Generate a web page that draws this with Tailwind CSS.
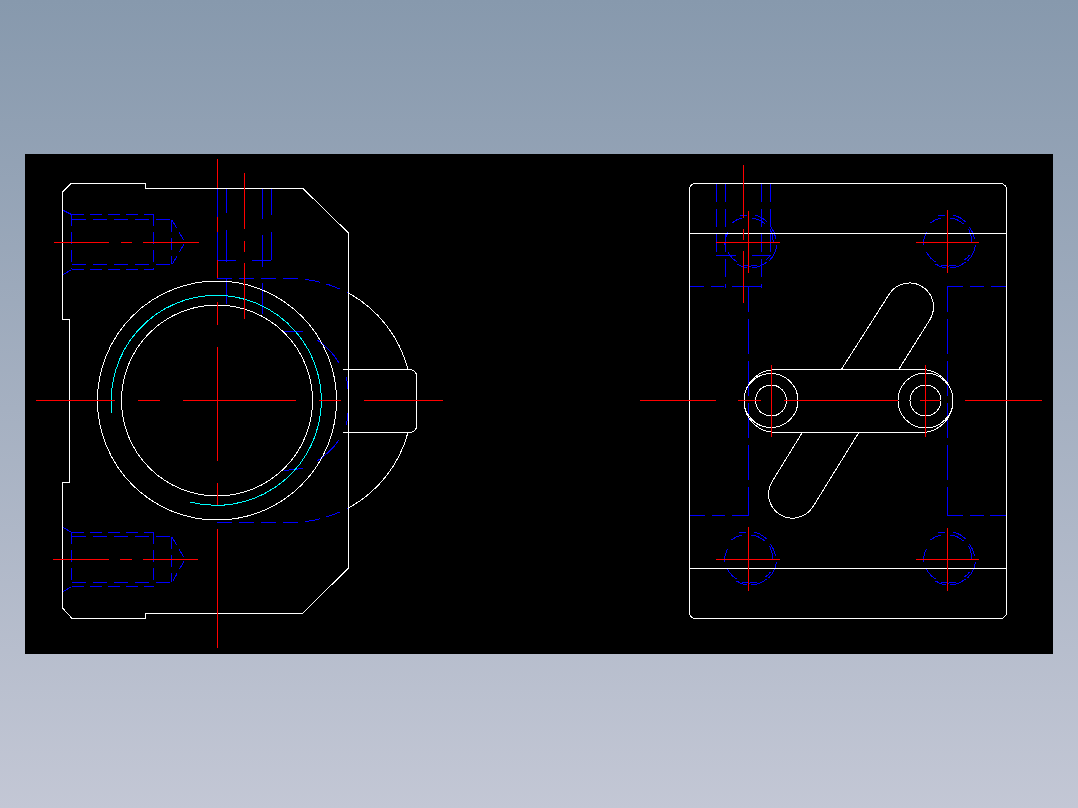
<!DOCTYPE html>
<html lang="en">
<head>
    <meta charset="UTF-8">
    <title>CAD drawing preview</title>
    <script src="https://cdn.jsdelivr.net/npm/@tailwindcss/browser@4"></script>
</head>
<body class="h-[808px] overflow-hidden bg-linear-to-b from-[#8799ad] to-[#c3c7d5]">
    <div class="pt-[154px] pl-[25px]">
        <div class="w-[1028px] h-[500px] bg-black">
            <svg class="block w-full h-full fill-none [shape-rendering:crispEdges]" viewBox="25 154 1028 500" stroke-width="1">
                <defs>
                    <!-- hole seen from above: outer + inner dashed arcs -->
                    <g id="hole">
                        <path d="M-17 -19A26 26 0 0 1 -7 -24M-9 -26A27 27 0 0 1 -2 -27M6 -27A27 27 0 0 1 18 -20M3 -24A24 24 0 0 1 16 -18M21 -13A24 24 0 0 1 24 0M22 -15A27 27 0 0 1 27 -3M28 3A28 28 0 0 1 20 19M22 13A25 25 0 0 1 17 18M18 20A27 27 0 0 1 3 26M8 23A24 24 0 0 1 -6 23M-2 26A26 26 0 0 1 -12 22M-12 20A24 24 0 0 1 -21 10M-24 3A24 24 0 0 1 -21 -10"/>
                    </g>
                </defs>

                <!-- left view: blue hidden lines -->
                <g class="stroke-[#0000ff]">
                    <path stroke-dasharray="12 6" d="M71.5 214.5H153.5M71.5 269.5H153.5M71.5 532.5H153.5M71.5 586.5H153.5"/>
                    <path stroke-dasharray="14 7" d="M71.5 219.5H172M71.5 264.5H172M71.5 536.5H172M71.5 582.5H172"/>
                    <path stroke-dasharray="12 6" d="M71.5 214V269M153.5 214V269M171.5 220V264M71.5 532V586M153.5 532V586M171.5 537V582"/>
                    <path d="M62.5 210L71.5 214.5M62.5 275L71.5 269.5M62.5 527L71.5 532.5M62.5 592L71.5 586.5"/>
                    <path stroke-dasharray="9 5" d="M172 220L185 242.5L172 264.5M172 537L185 559.5L172 582.5"/>
                    <path d="M226.5 189V213M226.5 230V262M226.5 278V304M262.5 189V219M262.5 235V267M262.5 283V314M271.5 189V215M271.5 232V260M217.5 189V217M217.5 232V260"/>
                    <path d="M217 260.5H236M252 260.5H271"/>
                    <path stroke-dasharray="15 7" d="M217 278.5H290A122 122 0 0 1 348 293"/>
                    <path stroke-dasharray="15 7" d="M217 522.5H290A122 122 0 0 0 348 508"/>
                    <path d="M284 331.5H303M284 470.5L303 468.5M317 340Q331 349 339 363M317 461Q331 452 339 440"/>
                    <path d="M346.5 377Q348 386 348.5 395M348.5 407Q348 416 346.5 425"/>
                </g>

                <!-- left view: body -->
                <g class="stroke-white">
                    <path d="M62.5 192L71 183.5H145.5V188.5H303L348.5 233V568L303 613H145.5V618.5H72L62.5 608V482.5H69.5V319.5H62.5Z"/>
                    <circle cx="217" cy="400.5" r="119.5"/>
                    <circle cx="217" cy="400.5" r="95.5"/>
                    <path d="M348.5 293A122 122 0 0 1 408 369.5M348.5 508A122 122 0 0 0 408 432.5"/>
                    <path d="M343 369.5H410Q416.5 370 416.5 376.5V425.5Q416.5 432 410 432.5H343"/>
                </g>
                <path class="stroke-[#00ffff]" d="M112 412.5A105 105 0 1 1 190 502"/>

                <!-- left view: centre lines -->
                <g class="stroke-[#ff0000]">
                    <path d="M36 400.5H115M138 400.5H160M183 400.5H296M319 400.5H341M364 400.5H443"/>
                    <path d="M217.5 159V188M217.5 217V232M217.5 260V278M217.5 302V325M217.5 347V461M217.5 483V505M217.5 529V648"/>
                    <path d="M244.5 173V229M244.5 241V252M244.5 263V319"/>
                    <path d="M54 242.5H109M121 242.5H132M143 242.5H199M53 559.5H109M120 559.5H132M143 559.5H198"/>
                </g>

                <!-- right view: blue hidden lines -->
                <g class="stroke-[#0000ff]">
                    <use href="#hole" x="749" y="242"/>
                    <use href="#hole" x="947.5" y="242"/>
                    <use href="#hole" x="748.5" y="559"/>
                    <use href="#hole" x="947.5" y="559"/>
                    <path stroke-dasharray="18 7" d="M716.5 184V255M770.5 184V255M725.5 184V288M761.5 184V288"/>
                    <path d="M716 255.5H736M752 255.5H770"/>
                    <path d="M689 286.5H704M711 286.5H724M732 286.5H761.5M947 286.5H963M970 286.5H984M991 286.5H1006"/>
                    <path d="M689 515.5H705M712 515.5H725M732 515.5H748.5M947 515.5H963M970 515.5H984M990 515.5H1006"/>
                    <path stroke-dasharray="35 7" stroke-dashoffset="9" d="M748.5 286V515M947.5 286V515"/>
                </g>

                <!-- right view: plate, slot, link -->
                <g class="stroke-white">
                    <rect x="689.5" y="183.5" width="317" height="435" rx="6"/>
                    <path d="M690 233.5H1006M690 568.5H1006"/>
                    <path d="M841.7 369L889 294.5A24 24 0 0 1 930 319.5L899 369M802 433L771.6 482.4A24 24 0 0 0 812.4 507.6L858.5 433"/>
                    <path d="M775.5 369.5H921.5A31.5 31.5 0 0 1 921.5 432.5H775.5A31.5 31.5 0 0 1 775.5 369.5Z"/>
                    <circle cx="771" cy="400.5" r="27"/>
                    <circle cx="771" cy="400.5" r="15.5"/>
                    <circle cx="925.5" cy="400.5" r="27.5"/>
                    <circle cx="925.5" cy="400.5" r="15.5"/>
                </g>

                <!-- right view: centre lines -->
                <g class="stroke-[#ff0000]">
                    <path d="M640 400.5H716M738 400.5H761M784 400.5H898M920 400.5H940M965 400.5H1042"/>
                    <path d="M771.5 365V437M925.5 365V437"/>
                    <path d="M716 242.5H780M748.5 211V273M743.5 165V218M743.5 229V240M743.5 251V303"/>
                    <path d="M916 242.5H979M947.5 210V273"/>
                    <path d="M716 559.5H780M748.5 527V591"/>
                    <path d="M916 559.5H979M947.5 528V591"/>
                </g>
            </svg>
        </div>
    </div>
</body>
</html>
